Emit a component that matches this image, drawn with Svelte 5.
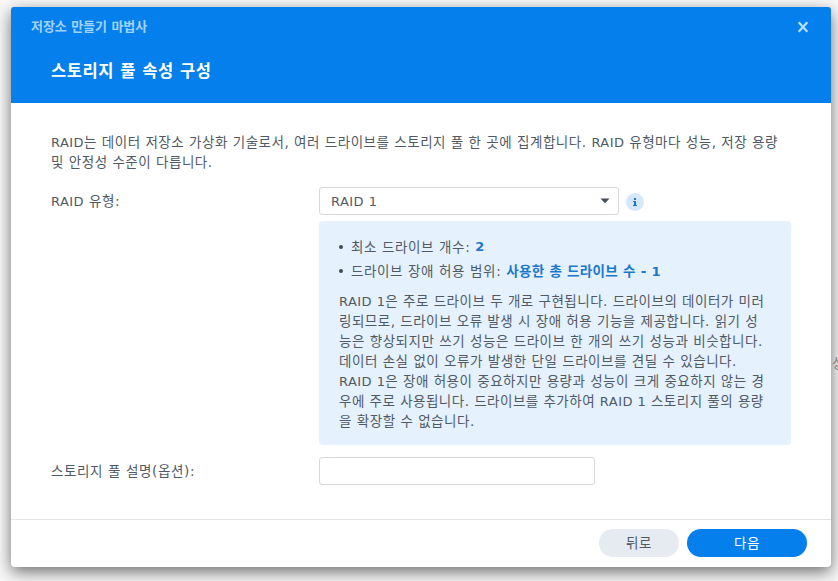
<script>
let raidType = 'RAID 1';
let description = '';

const intro = [
	{ text: 'RAID는 데이터 저장소 가상화 기술로서, 여러 드라이브를 스토리지 풀 한 곳에 집계합니다. RAID 유형마다 성능, 저장 용량', spacing: 0.52 },
	{ text: '및 안정성 수준이 다릅니다.', spacing: 0.52 }
];

const details = [
	{ text: 'RAID 1은 주로 드라이브 두 개로 구현됩니다. 드라이브의 데이터가 미러', spacing: 0.5 },
	{ text: '링되므로, 드라이브 오류 발생 시 장애 허용 기능을 제공합니다. 읽기 성', spacing: 0.5 },
	{ text: '능은 향상되지만 쓰기 성능은 드라이브 한 개의 쓰기 성능과 비슷합니다.', spacing: 0.53 },
	{ text: '데이터 손실 없이 오류가 발생한 단일 드라이브를 견딜 수 있습니다.', spacing: 0.53 },
	{ text: 'RAID 1은 장애 허용이 중요하지만 용량과 성능이 크게 중요하지 않는 경', spacing: 0.5 },
	{ text: '우에 주로 사용됩니다. 드라이브를 추가하여 RAID 1 스토리지 풀의 용량', spacing: 0.48 },
	{ text: '을 확장할 수 없습니다.', spacing: 0.52 }
];

// Latin words are set a little smaller than the Hangul around them
function split(text) {
	return text.split(/(RAID(?: 1)?)/).filter(Boolean);
}
</script>

<main>
	<span class="behind">성</span>

	<section class="window">
		<header>
			<div class="titlebar">
				<span class="title">저장소 만들기 마법사</span>
				<button class="close" aria-label="닫기">
					<svg width="12" height="12" viewBox="0 0 12 12">
						<path d="M1.7 1.2 10.3 10.8M10.3 1.2 1.7 10.8" />
					</svg>
				</button>
			</div>
			<h1>스토리지 풀 속성 구성</h1>
		</header>

		<div class="content">
			<div class="intro">
				{#each intro as line}
					<div class="line" style="letter-spacing: {line.spacing}px">{#each split(line.text) as part}<span class:latin={part.startsWith('RAID')}>{part}</span>{/each}</div>
				{/each}
			</div>

			<div class="row">
				<span class="label"><span class="latin">RAID</span> 유형:</span>
				<button class="select">
					<span class="latin">{raidType}</span>
					<svg width="10" height="6" viewBox="0 0 10 6">
						<path d="M0.5 0.5H9.5L5 5.2Z" />
					</svg>
				</button>
				<svg class="info" width="18" height="18" viewBox="0 0 18 18">
					<circle cx="9" cy="9" r="9" fill="#d5e8fb" />
					<path d="M8 5h2v2H8zM7 8h3v4h1v1H7v-1h1V9H7z" fill="#1a78cc" />
				</svg>
			</div>

			<div class="panel">
				<ul>
					<li>최소 드라이브 개수: <b class="latin">2</b></li>
					<li>드라이브 장애 허용 범위: <b>사용한 총 드라이브 수 - <span class="latin">1</span></b></li>
				</ul>
				{#each details as line}
					<div class="line" style="letter-spacing: {line.spacing}px">{#each split(line.text) as part}<span class:latin={part.startsWith('RAID')}>{part}</span>{/each}</div>
				{/each}
			</div>

			<div class="row">
				<span class="label">스토리지 풀 설명(옵션):</span>
				<input type="text" bind:value={description} />
			</div>
		</div>

		<footer>
			<button class="back">뒤로</button>
			<button class="next">다음</button>
		</footer>
	</section>
</main>

<style>
:global(body) {
	background: #f8f8f8;
}

main {
	position: relative;
	box-sizing: border-box;
	width: 838px;
	height: 581px;
	padding: 7px 7px 14px 11px;
	overflow: hidden;
	font-family: "DejaVu Sans", "Noto Sans CJK KR", sans-serif;
	font-size: 13.5px;
	line-height: 20px;
	letter-spacing: 0.62px;
	color: #505a65;
}

button, input {
	box-sizing: border-box;
	margin: 0;
	padding: 0;
	border: 0;
	font: inherit;
	letter-spacing: inherit;
	color: inherit;
}

.latin {
	font-size: 13px;
	letter-spacing: 0.45px;
}

.behind {
	position: absolute;
	left: 832px;
	top: 353px;
	color: #999;
}

.window {
	position: relative;
	display: flex;
	flex-direction: column;
	width: 820px;
	height: 560px;
	border-radius: 4px;
	background: #fff;
	box-shadow: 0 5px 16px rgba(0, 0, 0, 0.56);
}

header {
	box-sizing: border-box;
	height: 96px;
	padding: 10px 20px 0;
	border-radius: 3px 3px 0 0;
	background: #057feb;
}

.titlebar {
	display: flex;
	justify-content: space-between;
	align-items: center;
	height: 20px;
}

.title {
	font-size: 13px;
	font-weight: bold;
	letter-spacing: -0.05px;
	color: #a0d3fb;
}

.close {
	display: flex;
	margin-right: 2px;
	background: none;
}

.close path {
	fill: none;
	stroke: #b4dffd;
	stroke-width: 2.2;
}

h1 {
	margin: 23px 0 0 20px;
	font-size: 16.5px;
	line-height: 24px;
	letter-spacing: 0.55px;
	color: #fff;
}

.content {
	flex: 1;
	padding: 29px 40px 0;
}

.line {
	height: 20px;
	white-space: nowrap;
}

.row {
	display: flex;
	align-items: center;
	height: 28px;
}

.intro + .row {
	margin-top: 15px;
}

.label {
	width: 268px;
}

.select {
	display: flex;
	justify-content: space-between;
	align-items: center;
	width: 300px;
	height: 28px;
	padding: 0 8px 0 11px;
	border: 1px solid #d5d8dc;
	border-radius: 3px;
	background: #fff;
}

.select .latin {
	padding-top: 2px;
}

.select path {
	fill: #464e57;
}

.info {
	margin: 2px 0 0 7px;
}

.panel {
	box-sizing: border-box;
	width: 472px;
	height: 224px;
	margin: 6px 0 12px 268px;
	padding: 14px 20px 0;
	border-radius: 4px;
	background: #e5f1fd;
}

ul {
	margin: 0 0 8px;
	padding: 0;
	list-style: none;
}

li {
	display: flex;
	align-items: center;
	height: 24px;
	white-space: pre;
}

li::before {
	content: "";
	width: 4px;
	height: 4px;
	margin-right: 8px;
	border-radius: 50%;
	background: #414b55;
}

b {
	letter-spacing: 0.3px;
	color: #1a78cc;
}

input {
	width: 276px;
	height: 28px;
	padding: 0 10px;
	border: 1px solid #d5d8dc;
	border-radius: 3px;
	background: #fff;
}

footer {
	display: flex;
	box-sizing: border-box;
	justify-content: flex-end;
	gap: 8px;
	height: 48px;
	padding: 9px 24px 0;
	border-top: 1px solid #e2e4e6;
}

footer button {
	height: 28px;
	border-radius: 14px;
}

.back {
	width: 80px;
	background: #e6ebf2;
}

.next {
	width: 120px;
	background: #057feb;
	color: #fff;
}
</style>
